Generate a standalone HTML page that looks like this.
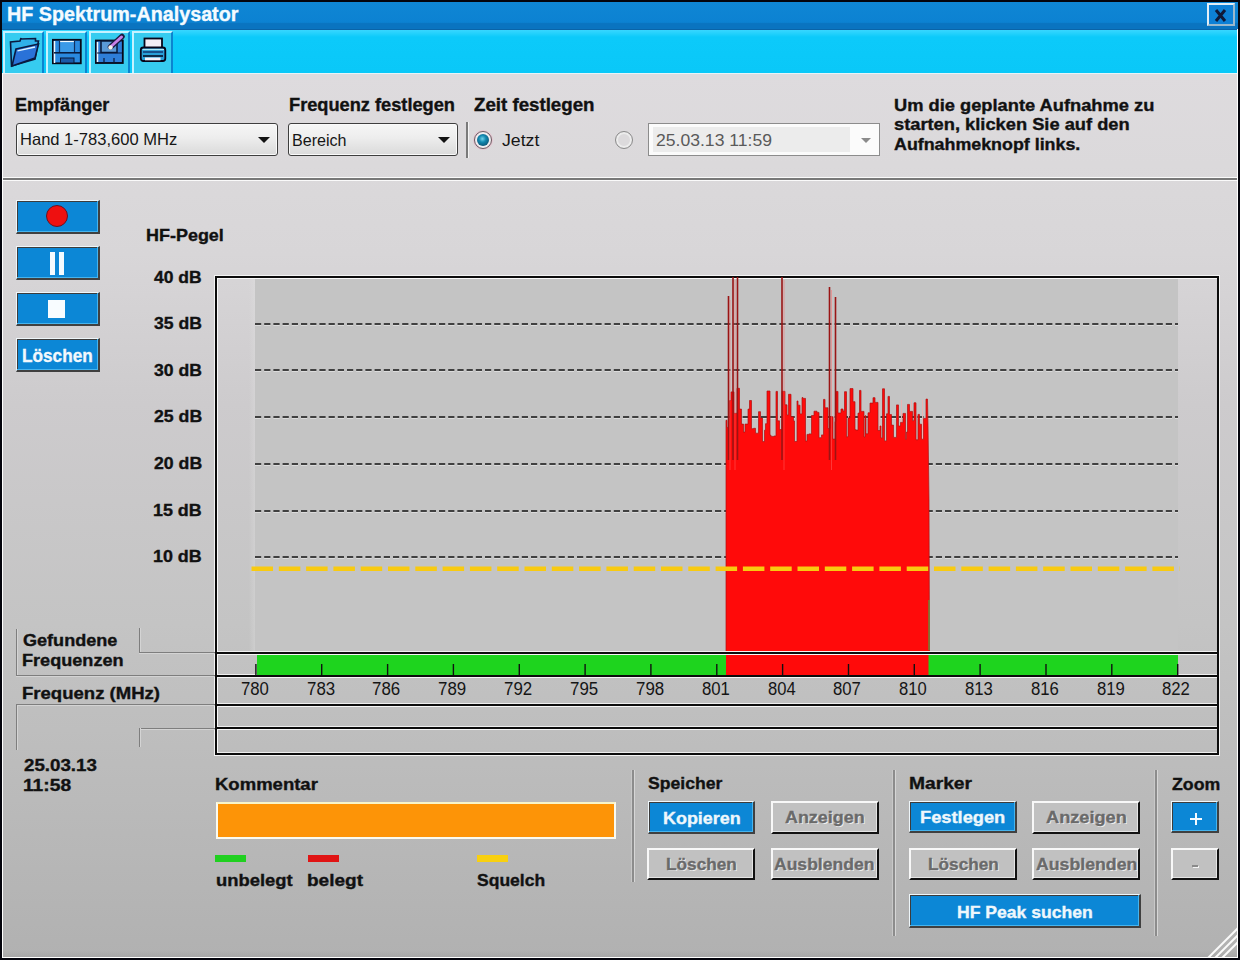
<!DOCTYPE html>
<html><head><meta charset="utf-8">
<style>
*{margin:0;padding:0;box-sizing:border-box}
html,body{width:1240px;height:960px;overflow:hidden;background:#04040c}
body{position:relative;font-family:"Liberation Sans",sans-serif;color:#111}
.a{position:absolute}
.tx{position:absolute;white-space:nowrap;transform-origin:0 0;font-family:"Liberation Sans",sans-serif}
#title{position:absolute;left:2px;top:2px;width:1236px;height:27px;background:linear-gradient(#0f86d4 0,#0c82d2 75%,#0a74c0 80%,#0a74c0 100%)}
#close{position:absolute;left:1207px;top:3px;width:28px;height:23px;border:2px solid #e2eef6;border-right-color:#9ab8cc;border-bottom-color:#9ab8cc;background:#0d80d6}
#tool{position:absolute;left:2px;top:29px;width:1235px;height:44px;background:linear-gradient(#38d6ff 0,#20d0fc 4px,#0ccafa 7px,#0ac8f8 100%);border-top:1px solid #0a64a8}
.tb{position:absolute;top:1px;width:41px;height:42px;background:#36ccf0;border-left:2px solid #c4f2ff;border-top:2px solid #c4f2ff;border-right:2px solid #0b84d0}
#main{position:absolute;left:3px;top:73px;width:1234px;height:884px;background:linear-gradient(#dedbde 0,#dbd9db 90px,#d8d6d8 180px,#cdcbcd 330px,#c4c4c4 550px,#b8b8b8 760px,#b1b1b1 884px);border-top:1px solid #e8f4f8}
.dd{position:absolute;border:1px solid #3e3e3e;border-radius:3px;background:linear-gradient(#f6f6f6 0,#ededed 45%,#dadada 100%);box-shadow:inset 0 0 0 1px #fafafa}
.arr{position:absolute;width:0;height:0;border-left:6px solid transparent;border-right:6px solid transparent;border-top:6px solid #111}
.bb{position:absolute;background:#0c87d6;border-top:1px solid #eef6fa;border-left:1px solid #eef6fa;border-right:2px solid #404040;border-bottom:2px solid #404040;box-shadow:inset -1px -1px 0 #46b4ee, inset 1px 1px 0 #3c3c3c}
.gb{position:absolute;background:#c1c1c1;border-top:2px solid #f8f8f8;border-left:2px solid #f8f8f8;border-right:2px solid #111;border-bottom:2px solid #111;box-shadow:inset -1px -1px 0 #e4e4e4}
.vs{position:absolute;width:2px;background:#8c8c8c;box-shadow:1px 0 0 #d6d6d6,-1px 0 0 #c8c8c8}
.gl{position:absolute;background:#7e7e7e}
</style></head><body>
<!-- window frame -->
<div class="a" style="left:2px;top:2px;width:1236px;height:956px;background:#fff"></div>
<div id="title"></div>
<div id="close"><svg width="23" height="20" style="position:absolute;left:0;top:0"><path d="M7,5 L16,16 M16,5 L7,16" stroke="#101838" stroke-width="3"/></svg></div>
<div id="tool">
  <div class="tb" style="left:1px"><svg width="40" height="40" style="position:absolute;left:4px;top:4px">
    <path d="M1.5,5 L2.5,29 L26,22 L29.5,4 L26.5,4 L26.5,1.5 L12,2 L12,1 L11,4 Z" fill="#30b0e8" stroke="#0a1a40" stroke-width="1.6"/>
    <path d="M7,12 L29.5,7 L26,21 L3,29 Z" fill="#2a72d8" stroke="#0a1a40" stroke-width="1.6"/>
    <path d="M8.5,13.8 L26,10" stroke="#e0f4ff" stroke-width="1.3"/>
  </svg></div>
  <div class="tb" style="left:44px"><svg width="40" height="40" style="position:absolute;left:4px;top:4px">
    <rect x="0.8" y="2.8" width="28" height="23.5" fill="#2a8ae0" stroke="#060818" stroke-width="1.8"/>
    <rect x="8" y="4" width="14" height="11" fill="#3a9ae8"/>
    <path d="M8,4.5 L22,4.5" stroke="#f4fbff" stroke-width="1.2"/>
    <path d="M2.5,4 L2.5,26" stroke="#f4fbff" stroke-width="1.5"/>
    <path d="M7.5,3 L7.5,15.5 M22.5,3 L22.5,15.5" stroke="#103060" stroke-width="1.2"/>
    <path d="M2,15.8 L28,15.8" stroke="#081838" stroke-width="1.5"/>
    <rect x="8.5" y="21" width="13.5" height="5" fill="#1a5aa8" stroke="#0a1838" stroke-width="1"/>
  </svg></div>
  <div class="tb" style="left:87px"><svg width="40" height="40" style="position:absolute;left:4px;top:0px">
    <rect x="0.8" y="7.5" width="27" height="22.5" fill="#2e7ed8" stroke="#060818" stroke-width="1.8"/>
    <path d="M2.5,9 L2.5,29" stroke="#f4fbff" stroke-width="1.5"/>
    <rect x="6" y="8" width="16" height="11.5" fill="#5a9ad8" stroke="#081838" stroke-width="1.5"/>
    <path d="M2,20 L27,20" stroke="#0a1838" stroke-width="1"/>
    <path d="M9,25 L9,30 M19,25 L19,30" stroke="#0a1838" stroke-width="1.2"/>
    <path d="M15.5,14 L27,3.5" stroke="#1a1a40" stroke-width="5.5" stroke-linecap="round"/>
    <path d="M16.5,13 L26.5,4" stroke="#c880e8" stroke-width="3" stroke-linecap="round"/>
    <circle cx="15.5" cy="14.5" r="2.2" fill="#f4f4f0"/>
  </svg></div>
  <div class="tb" style="left:130px"><svg width="40" height="40" style="position:absolute;left:4px;top:4px">
    <rect x="6.5" y="1.5" width="17.5" height="10" fill="#f2eef6" stroke="#06061a" stroke-width="1.8"/>
    <rect x="2.8" y="10.5" width="24.5" height="13.5" rx="2.5" fill="#28a0d8" stroke="#06061a" stroke-width="1.8"/>
    <path d="M4.5,12.5 L26,12.5" stroke="#b0e8f8" stroke-width="1.2"/>
    <path d="M5,15 L25,15" stroke="#10306a" stroke-width="1.4"/>
    <path d="M5,19 L25,19" stroke="#06061a" stroke-width="1.5"/>
    <rect x="7" y="20.5" width="15.5" height="2.8" fill="#f4f0f8"/>
  </svg></div>
</div>
<div id="main"></div>

<!-- top controls -->
<div class="dd" style="left:16px;top:123px;width:262px;height:33px"><div class="arr" style="left:241px;top:13px"></div></div>
<div class="dd" style="left:288px;top:123px;width:170px;height:33px"><div class="arr" style="left:149px;top:13px"></div></div>
<div class="vs" style="left:466px;top:122px;height:36px;width:2px;border:0;background:#7a7a7a;box-shadow:1px 0 0 #f4f4f4"></div>
<!-- radio 1 -->
<div class="a" style="left:474px;top:131px;width:18px;height:18px;border-radius:50%;background:#f0ecf0;border:1.5px solid #6a5a60;box-shadow:0 0 0 1px #e4c4d0"></div>
<div class="a" style="left:477px;top:134px;width:12px;height:12px;border-radius:50%;background:radial-gradient(circle at 45% 40%,#70d0e8 0,#1488b0 35%,#083a58 100%);"></div>
<!-- radio 2 -->
<div class="a" style="left:615px;top:131px;width:18px;height:18px;border-radius:50%;background:#dcdadc;border:1.5px solid #8a8a8a;box-shadow:inset 0 0 0 2px #ececec"></div>
<!-- date box -->
<div class="a" style="left:648px;top:123px;width:232px;height:33px;background:#fbfbfb;border:1px solid #8c8c8c"></div>
<div class="a" style="left:653px;top:127px;width:197px;height:25px;background:#ececec"></div>
<div class="arr" style="left:861px;top:138px;border-left-width:5px;border-right-width:5px;border-top:5px solid #8a8a8a"></div>
<!-- separator -->
<div class="a" style="left:3px;top:177px;width:1234px;height:4px;background:#787878;border-top:1px solid #fafafa;border-bottom:1px solid #fafafa"></div>

<!-- left buttons -->
<div class="bb" style="left:16px;top:200px;width:84px;height:34px"></div>
<div class="a" style="left:45.5px;top:205px;width:22px;height:22px;border-radius:50%;background:#ee1010;border:1px solid #6a1020"></div>
<div class="bb" style="left:16px;top:246px;width:84px;height:34px"></div>
<div class="a" style="left:50px;top:252px;width:5px;height:23px;background:#f4fbff"></div>
<div class="a" style="left:59px;top:252px;width:5px;height:23px;background:#f4fbff"></div>
<div class="bb" style="left:16px;top:292px;width:84px;height:34px"></div>
<div class="a" style="left:48px;top:300px;width:17px;height:18px;background:#f8fcff"></div>
<div class="bb" style="left:16px;top:338px;width:84px;height:34px"></div>

<!-- chart -->
<div class="a" style="left:214px;top:275px;width:1006px;height:481px;border:1px solid #f4f4f4"></div>
<div class="a" style="left:215px;top:276px;width:1004px;height:479px;border:2px solid #0c0c0c"></div>
<div class="a" style="left:217px;top:278px;width:1000px;height:1px;background:#f8f8f8"></div>
<div class="a" style="left:217px;top:278px;width:1px;height:475px;background:#f8f8f8"></div>
<div class="a" style="left:249px;top:279px;width:6px;height:373px;background:linear-gradient(90deg,rgba(225,225,225,0),rgba(225,225,225,.35))"></div>
<div class="a" style="left:255px;top:279px;width:923px;height:373px;background:#c4c4c4"></div>
<svg class="a" style="left:0;top:0" width="1240" height="960">
  <g stroke="#f0f0f0" stroke-width="1" stroke-dasharray="6.2 3" opacity=".55"><line x1="255" y1="325.5" x2="1178" y2="325.5"/><line x1="255" y1="371.5" x2="1178" y2="371.5"/><line x1="255" y1="418.5" x2="1178" y2="418.5"/><line x1="255" y1="465.5" x2="1178" y2="465.5"/><line x1="255" y1="512.5" x2="1178" y2="512.5"/><line x1="255" y1="558.5" x2="1178" y2="558.5"/></g>
  <g stroke="#141414" stroke-width="1.7" stroke-dasharray="6.2 3"><line x1="255" y1="324.0" x2="1178" y2="324.0"/><line x1="255" y1="370.0" x2="1178" y2="370.0"/><line x1="255" y1="417.0" x2="1178" y2="417.0"/><line x1="255" y1="464.0" x2="1178" y2="464.0"/><line x1="255" y1="511.0" x2="1178" y2="511.0"/><line x1="255" y1="557.0" x2="1178" y2="557.0"/></g>
  <g stroke="#e6b4b4" stroke-width="1"><line x1="730.5" y1="400" x2="730.5" y2="447.6"/><line x1="767.5" y1="400" x2="767.5" y2="443.6"/><line x1="779.5" y1="400" x2="779.5" y2="445.3"/><line x1="803.5" y1="400" x2="803.5" y2="438.9"/><line x1="848.5" y1="400" x2="848.5" y2="442.2"/><line x1="879.5" y1="400" x2="879.5" y2="435.5"/><line x1="901.5" y1="400" x2="901.5" y2="434.3"/><line x1="911.5" y1="400" x2="911.5" y2="440.6"/><line x1="922.5" y1="400" x2="922.5" y2="440.5"/></g>
  <path d="M726.0,652.0 L726.0,450.0 L726.0,420.3 L727.0,420.3 L727.0,427.4 L728.5,427.4 L728.5,419.2 L729.5,419.2 L729.5,400.6 L731.0,400.6 L731.0,391.9 L734.0,391.9 L734.0,413.3 L737.0,413.3 L737.0,388.3 L739.5,388.3 L739.5,409.1 L741.5,409.1 L741.5,424.1 L743.5,424.1 L743.5,432.1 L745.0,432.1 L745.0,424.1 L748.0,424.1 L748.0,409.1 L749.5,409.1 L749.5,400.5 L751.5,400.5 L751.5,428.7 L753.5,428.7 L753.5,428.3 L755.5,428.3 L755.5,433.2 L758.5,433.2 L758.5,411.7 L760.5,411.7 L760.5,418.0 L762.5,418.0 L762.5,441.6 L764.5,441.6 L764.5,430.2 L765.5,430.2 L765.5,423.7 L767.0,423.7 L767.0,391.0 L770.0,391.0 L770.0,435.2 L771.0,435.2 L771.0,436.4 L774.0,436.4 L774.0,436.0 L776.0,436.0 L776.0,391.4 L777.5,391.4 L777.5,420.8 L779.5,420.8 L779.5,429.6 L782.0,429.6 L782.0,391.3 L785.0,391.3 L785.0,404.8 L787.0,404.8 L787.0,415.0 L788.5,415.0 L788.5,394.3 L791.0,394.3 L791.0,416.8 L793.5,416.8 L793.5,420.9 L794.5,420.9 L794.5,441.5 L797.0,441.5 L797.0,401.0 L798.0,401.0 L798.0,405.2 L800.0,405.2 L800.0,413.9 L802.0,413.9 L802.0,397.6 L803.0,397.6 L803.0,398.4 L805.5,398.4 L805.5,441.1 L807.0,441.1 L807.0,434.4 L809.0,434.4 L809.0,433.9 L811.5,433.9 L811.5,415.5 L814.0,415.5 L814.0,411.2 L817.0,411.2 L817.0,412.4 L819.0,412.4 L819.0,437.7 L821.5,437.7 L821.5,434.9 L823.5,434.9 L823.5,399.4 L825.0,399.4 L825.0,407.8 L828.0,407.8 L828.0,428.5 L830.0,428.5 L830.0,416.7 L833.0,416.7 L833.0,439.1 L835.0,439.1 L835.0,421.6 L836.0,421.6 L836.0,391.4 L838.0,391.4 L838.0,413.0 L841.0,413.0 L841.0,409.0 L843.0,409.0 L843.0,410.9 L844.5,410.9 L844.5,391.7 L846.5,391.7 L846.5,436.8 L848.0,436.8 L848.0,418.0 L850.0,418.0 L850.0,388.6 L853.0,388.6 L853.0,401.7 L855.0,401.7 L855.0,429.7 L856.0,429.7 L856.0,430.1 L858.0,430.1 L858.0,413.1 L859.5,413.1 L859.5,390.4 L861.0,390.4 L861.0,411.4 L864.0,411.4 L864.0,437.0 L865.0,437.0 L865.0,415.8 L866.0,415.8 L866.0,433.8 L868.0,433.8 L868.0,412.8 L870.0,412.8 L870.0,403.1 L873.0,403.1 L873.0,397.7 L875.0,397.7 L875.0,402.4 L878.0,402.4 L878.0,430.5 L880.0,430.5 L880.0,426.0 L881.0,426.0 L881.0,437.9 L882.5,437.9 L882.5,388.8 L884.5,388.8 L884.5,440.9 L886.5,440.9 L886.5,413.8 L888.0,413.8 L888.0,396.4 L889.5,396.4 L889.5,414.6 L891.5,414.6 L891.5,425.1 L893.5,425.1 L893.5,437.4 L896.5,437.4 L896.5,404.9 L898.5,404.9 L898.5,426.0 L900.5,426.0 L900.5,422.4 L903.0,422.4 L903.0,413.4 L905.5,413.4 L905.5,439.3 L906.5,439.3 L906.5,432.0 L907.5,432.0 L907.5,404.4 L909.5,404.4 L909.5,411.4 L912.5,411.4 L912.5,420.7 L914.0,420.7 L914.0,402.8 L916.0,402.8 L916.0,439.8 L918.0,439.8 L918.0,414.4 L919.5,414.4 L919.5,424.2 L921.5,424.2 L921.5,439.2 L923.5,439.2 L923.5,418.4 L926.0,418.4 L926.0,399.1 L927.5,399.1 L928.0,425.0 L929.0,500.0 L929.5,652.0 Z" fill="#ff0a0a" stroke="#b01010" stroke-width="0.7"/>
  <g stroke="#a41212" stroke-width="1"></g>
  
  <g stroke="#9a1414" stroke-width="1.6"><line x1="728.5" y1="296.0" x2="728.5" y2="460"/><line x1="733.0" y1="277.0" x2="733.0" y2="460"/><line x1="737.5" y1="277.0" x2="737.5" y2="460"/><line x1="782.0" y1="277.0" x2="782.0" y2="460"/><line x1="829.5" y1="287.0" x2="829.5" y2="460"/><line x1="835.5" y1="297.0" x2="835.5" y2="460"/></g>
  <g stroke="#ff6a6a" stroke-width="0.8" opacity=".6"><line x1="730" y1="300" x2="730" y2="470"/><line x1="735" y1="280" x2="735" y2="470"/><line x1="784" y1="280" x2="784" y2="470"/><line x1="831.5" y1="290" x2="831.5" y2="470"/></g>
  <line x1="929" y1="600" x2="929" y2="650" stroke="#50a040" stroke-width="1.2"/>
  <line x1="251.5" y1="568.7" x2="1180" y2="568.7" stroke="#f8ca10" stroke-width="4.5" stroke-dasharray="21.5 5.8"/>
  <!-- rows -->
  <rect x="218" y="651" width="999" height="1" fill="#f0f0f0"/>
  <rect x="218" y="674" width="999" height="1" fill="#eeeeee"/>
  <rect x="218" y="703" width="999" height="1" fill="#eeeeee"/>
  <rect x="218" y="726" width="999" height="1" fill="#eeeeee"/>
  <rect x="218" y="752" width="999" height="1" fill="#eeeeee"/>
  <rect x="217" y="652" width="1000" height="2" fill="#0c0c0c"/>
  <rect x="217" y="654" width="1000" height="1" fill="#f6f6f6"/>
  <rect x="257" y="655" width="921" height="20" fill="#1ed41e"/>
  <rect x="726" y="655" width="202.5" height="20" fill="#ff0a0a"/>
  <g stroke="#101010" stroke-width="1.4"><line x1="255.9" y1="664" x2="255.9" y2="675"/><line x1="321.7" y1="664" x2="321.7" y2="675"/><line x1="387.6" y1="664" x2="387.6" y2="675"/><line x1="453.4" y1="664" x2="453.4" y2="675"/><line x1="519.3" y1="664" x2="519.3" y2="675"/><line x1="585.1" y1="664" x2="585.1" y2="675"/><line x1="650.9" y1="664" x2="650.9" y2="675"/><line x1="716.8" y1="664" x2="716.8" y2="675"/><line x1="782.6" y1="664" x2="782.6" y2="675"/><line x1="848.5" y1="664" x2="848.5" y2="675"/><line x1="914.3" y1="664" x2="914.3" y2="675"/><line x1="980.1" y1="664" x2="980.1" y2="675"/><line x1="1046.0" y1="664" x2="1046.0" y2="675"/><line x1="1111.8" y1="664" x2="1111.8" y2="675"/><line x1="1177.7" y1="664" x2="1177.7" y2="675"/></g>
  <rect x="217" y="675" width="1000" height="2" fill="#0c0c0c"/>
  <rect x="217" y="677" width="1000" height="1" fill="#f6f6f6"/>
  <rect x="217" y="704" width="1000" height="2" fill="#0c0c0c"/>
  <rect x="217" y="706" width="1000" height="1" fill="#f6f6f6"/>
  <rect x="217" y="727" width="1000" height="2" fill="#0c0c0c"/>
  <rect x="217" y="729" width="1000" height="1" fill="#f6f6f6"/>
</svg>

<!-- left table lines -->
<div class="gl" style="left:16px;top:629px;width:1px;height:47px;box-shadow:1px 0 0 #d4d4d4"></div>
<div class="gl" style="left:139px;top:628px;width:1px;height:24px;box-shadow:1px 0 0 #d4d4d4"></div>
<div class="gl" style="left:139px;top:652px;width:76px;height:1px;box-shadow:0 1px 0 #d4d4d4"></div>
<div class="gl" style="left:16px;top:675px;width:199px;height:1px;box-shadow:0 1px 0 #d4d4d4"></div>
<div class="gl" style="left:16px;top:704px;width:199px;height:1px;box-shadow:0 1px 0 #d4d4d4"></div>
<div class="gl" style="left:16px;top:705px;width:1px;height:45px;box-shadow:1px 0 0 #d4d4d4"></div>
<div class="gl" style="left:139px;top:728px;width:76px;height:1px;box-shadow:0 1px 0 #d4d4d4"></div>
<div class="gl" style="left:139px;top:728px;width:1px;height:19px;box-shadow:1px 0 0 #d4d4d4"></div>

<!-- bottom -->
<div class="a" style="left:216px;top:802px;width:400px;height:37px;background:#fd9407;border:2px solid #fafaf0;border-top-color:#f8f4c8"></div>
<div class="a" style="left:215px;top:855px;width:31px;height:7px;background:#20d020"></div>
<div class="a" style="left:308px;top:855px;width:31px;height:7px;background:#e01414"></div>
<div class="a" style="left:477px;top:855px;width:31px;height:7px;background:#f8d010"></div>

<div class="vs" style="left:632px;top:770px;height:112px"></div>
<div class="bb" style="left:648px;top:801px;width:107px;height:33px"></div>
<div class="gb" style="left:771px;top:801px;width:108px;height:33px"></div>
<div class="gb" style="left:647px;top:848px;width:108px;height:32px"></div>
<div class="gb" style="left:771px;top:848px;width:108px;height:32px"></div>

<div class="vs" style="left:893px;top:770px;height:166px"></div>
<div class="bb" style="left:909px;top:801px;width:108px;height:32px"></div>
<div class="gb" style="left:1032px;top:801px;width:108px;height:33px"></div>
<div class="gb" style="left:909px;top:848px;width:108px;height:32px"></div>
<div class="gb" style="left:1032px;top:848px;width:108px;height:32px"></div>
<div class="bb" style="left:909px;top:894px;width:232px;height:34px"></div>

<div class="vs" style="left:1155px;top:770px;height:166px"></div>
<div class="bb" style="left:1171px;top:801px;width:48px;height:32px"></div>
<div class="a" style="left:1189.5px;top:818px;width:12px;height:2px;background:#f4faff"></div>
<div class="a" style="left:1194.5px;top:813px;width:2px;height:12px;background:#f4faff"></div>
<div class="gb" style="left:1171px;top:848px;width:48px;height:32px"></div>
<div class="a" style="left:1192px;top:865px;width:6px;height:2px;background:#8a8a8a;box-shadow:1px 1px 0 #f4f4f4"></div>

<div class="a" style="left:3px;top:951px;width:1234px;height:6px;background:linear-gradient(rgba(150,150,150,0),rgba(150,150,150,.35))"></div>
<!-- resize grip -->
<svg class="a" style="left:1205px;top:925px" width="33" height="33">
  <g stroke="#fafafa" stroke-width="2"><line x1="33" y1="3" x2="3" y2="33"/><line x1="33" y1="10" x2="10" y2="33"/><line x1="33" y1="17" x2="17" y2="33"/></g>
</svg>

<div class="tx" style="left:7.17px;top:4.95px;font-size:19.48px;line-height:19.48px;font-weight:bold;color:#f4fbff;transform:scaleX(1.0138);-webkit-text-stroke:0.35px currentColor;">HF Spektrum-Analysator</div>
<div class="tx" style="left:15.37px;top:97.18px;font-size:17.44px;line-height:17.44px;font-weight:bold;color:#111;transform:scaleX(1.0349);-webkit-text-stroke:0.35px currentColor;">Empfänger</div>
<div class="tx" style="left:289.26px;top:97.18px;font-size:17.44px;line-height:17.44px;font-weight:bold;color:#111;transform:scaleX(1.0445);-webkit-text-stroke:0.35px currentColor;">Frequenz festlegen</div>
<div class="tx" style="left:473.81px;top:97.18px;font-size:17.44px;line-height:17.44px;font-weight:bold;color:#111;transform:scaleX(1.0718);-webkit-text-stroke:0.35px currentColor;">Zeit festlegen</div>
<div class="tx" style="left:19.51px;top:131.79px;font-size:16.72px;line-height:16.72px;font-weight:normal;color:#151515;transform:scaleX(0.9898);">Hand 1-783,600 MHz</div>
<div class="tx" style="left:292.44px;top:131.72px;font-size:17.15px;line-height:17.15px;font-weight:normal;color:#151515;transform:scaleX(0.9382);">Bereich</div>
<div class="tx" style="left:502.02px;top:131.72px;font-size:17.15px;line-height:17.15px;font-weight:normal;color:#151515;transform:scaleX(1.0302);">Jetzt</div>
<div class="tx" style="left:656.18px;top:133.19px;font-size:16.72px;line-height:16.72px;font-weight:normal;color:#5a5a5a;transform:scaleX(1.0520);">25.03.13 11:59</div>
<div class="tx" style="left:893.64px;top:96.56px;font-size:16.28px;line-height:16.28px;font-weight:bold;color:#111;transform:scaleX(1.1238);-webkit-text-stroke:0.35px currentColor;">Um die geplante Aufnahme zu</div>
<div class="tx" style="left:893.93px;top:116.26px;font-size:16.28px;line-height:16.28px;font-weight:bold;color:#111;transform:scaleX(1.1237);-webkit-text-stroke:0.35px currentColor;">starten, klicken Sie auf den</div>
<div class="tx" style="left:894.22px;top:136.46px;font-size:16.28px;line-height:16.28px;font-weight:bold;color:#111;transform:scaleX(1.0964);-webkit-text-stroke:0.35px currentColor;">Aufnahmeknopf links.</div>
<div class="tx" style="left:21.93px;top:348.28px;font-size:17.44px;line-height:17.44px;font-weight:bold;color:#f2f8fc;transform:scaleX(0.9859);-webkit-text-stroke:0.35px currentColor;">Löschen</div>
<div class="tx" style="left:146.38px;top:227.06px;font-size:16.28px;line-height:16.28px;font-weight:bold;color:#111;transform:scaleX(1.1039);-webkit-text-stroke:0.35px currentColor;">HF-Pegel</div>
<div class="tx" style="left:154.25px;top:268.55px;font-size:17.01px;line-height:17.01px;font-weight:bold;color:#111;transform:scaleX(1.0280);-webkit-text-stroke:0.35px currentColor;">40 dB</div>
<div class="tx" style="left:153.98px;top:315.15px;font-size:17.01px;line-height:17.01px;font-weight:bold;color:#111;transform:scaleX(1.0340);-webkit-text-stroke:0.35px currentColor;">35 dB</div>
<div class="tx" style="left:153.98px;top:361.75px;font-size:17.01px;line-height:17.01px;font-weight:bold;color:#111;transform:scaleX(1.0340);-webkit-text-stroke:0.35px currentColor;">30 dB</div>
<div class="tx" style="left:153.70px;top:408.35px;font-size:17.01px;line-height:17.01px;font-weight:bold;color:#111;transform:scaleX(1.0401);-webkit-text-stroke:0.35px currentColor;">25 dB</div>
<div class="tx" style="left:153.70px;top:454.95px;font-size:17.01px;line-height:17.01px;font-weight:bold;color:#111;transform:scaleX(1.0401);-webkit-text-stroke:0.35px currentColor;">20 dB</div>
<div class="tx" style="left:153.13px;top:501.55px;font-size:17.01px;line-height:17.01px;font-weight:bold;color:#111;transform:scaleX(1.0525);-webkit-text-stroke:0.35px currentColor;">15 dB</div>
<div class="tx" style="left:153.13px;top:548.15px;font-size:17.01px;line-height:17.01px;font-weight:bold;color:#111;transform:scaleX(1.0525);-webkit-text-stroke:0.35px currentColor;">10 dB</div>
<div class="tx" style="left:23.04px;top:632.55px;font-size:15.70px;line-height:15.70px;font-weight:bold;color:#111;transform:scaleX(1.1516);-webkit-text-stroke:0.35px currentColor;">Gefundene</div>
<div class="tx" style="left:22.47px;top:652.55px;font-size:15.70px;line-height:15.70px;font-weight:bold;color:#111;transform:scaleX(1.1534);-webkit-text-stroke:0.35px currentColor;">Frequenzen</div>
<div class="tx" style="left:22.44px;top:686.45px;font-size:15.70px;line-height:15.70px;font-weight:bold;color:#111;transform:scaleX(1.1821);-webkit-text-stroke:0.35px currentColor;">Frequenz (MHz)</div>
<div class="tx" style="left:240.87px;top:678.80px;font-size:19.19px;line-height:19.19px;font-weight:normal;color:#151515;transform:scaleX(0.8716);">780</div>
<div class="tx" style="left:306.67px;top:678.80px;font-size:19.19px;line-height:19.19px;font-weight:normal;color:#151515;transform:scaleX(0.8802);">783</div>
<div class="tx" style="left:372.48px;top:678.80px;font-size:19.19px;line-height:19.19px;font-weight:normal;color:#151515;transform:scaleX(0.8802);">786</div>
<div class="tx" style="left:438.29px;top:678.80px;font-size:19.19px;line-height:19.19px;font-weight:normal;color:#151515;transform:scaleX(0.8802);">789</div>
<div class="tx" style="left:504.10px;top:678.80px;font-size:19.19px;line-height:19.19px;font-weight:normal;color:#151515;transform:scaleX(0.8802);">792</div>
<div class="tx" style="left:569.91px;top:678.80px;font-size:19.19px;line-height:19.19px;font-weight:normal;color:#151515;transform:scaleX(0.8802);">795</div>
<div class="tx" style="left:635.72px;top:678.80px;font-size:19.19px;line-height:19.19px;font-weight:normal;color:#151515;transform:scaleX(0.8802);">798</div>
<div class="tx" style="left:701.80px;top:678.80px;font-size:19.19px;line-height:19.19px;font-weight:normal;color:#151515;transform:scaleX(0.8716);">801</div>
<div class="tx" style="left:767.61px;top:678.80px;font-size:19.19px;line-height:19.19px;font-weight:normal;color:#151515;transform:scaleX(0.8631);">804</div>
<div class="tx" style="left:833.42px;top:678.80px;font-size:19.19px;line-height:19.19px;font-weight:normal;color:#151515;transform:scaleX(0.8716);">807</div>
<div class="tx" style="left:899.23px;top:678.80px;font-size:19.19px;line-height:19.19px;font-weight:normal;color:#151515;transform:scaleX(0.8631);">810</div>
<div class="tx" style="left:965.04px;top:678.80px;font-size:19.19px;line-height:19.19px;font-weight:normal;color:#151515;transform:scaleX(0.8716);">813</div>
<div class="tx" style="left:1030.85px;top:678.80px;font-size:19.19px;line-height:19.19px;font-weight:normal;color:#151515;transform:scaleX(0.8716);">816</div>
<div class="tx" style="left:1096.66px;top:678.80px;font-size:19.19px;line-height:19.19px;font-weight:normal;color:#151515;transform:scaleX(0.8716);">819</div>
<div class="tx" style="left:1162.47px;top:678.80px;font-size:19.19px;line-height:19.19px;font-weight:normal;color:#151515;transform:scaleX(0.8716);">822</div>
<div class="tx" style="left:23.92px;top:757.77px;font-size:16.86px;line-height:16.86px;font-weight:bold;color:#111;transform:scaleX(1.1100);-webkit-text-stroke:0.35px currentColor;">25.03.13</div>
<div class="tx" style="left:23.30px;top:777.67px;font-size:16.86px;line-height:16.86px;font-weight:bold;color:#111;transform:scaleX(1.1395);-webkit-text-stroke:0.35px currentColor;">11:58</div>
<div class="tx" style="left:215.34px;top:776.59px;font-size:16.72px;line-height:16.72px;font-weight:bold;color:#111;transform:scaleX(1.1081);-webkit-text-stroke:0.35px currentColor;">Kommentar</div>
<div class="tx" style="left:215.64px;top:871.54px;font-size:16.42px;line-height:16.42px;font-weight:bold;color:#111;transform:scaleX(1.1216);-webkit-text-stroke:0.35px currentColor;">unbelegt</div>
<div class="tx" style="left:307.01px;top:871.54px;font-size:16.42px;line-height:16.42px;font-weight:bold;color:#111;transform:scaleX(1.1595);-webkit-text-stroke:0.35px currentColor;">belegt</div>
<div class="tx" style="left:476.63px;top:871.54px;font-size:16.42px;line-height:16.42px;font-weight:bold;color:#111;transform:scaleX(1.0679);-webkit-text-stroke:0.35px currentColor;">Squelch</div>
<div class="tx" style="left:648.43px;top:776.29px;font-size:16.72px;line-height:16.72px;font-weight:bold;color:#111;transform:scaleX(1.0526);-webkit-text-stroke:0.35px currentColor;">Speicher</div>
<div class="tx" style="left:663.18px;top:810.89px;font-size:16.72px;line-height:16.72px;font-weight:bold;color:#eef7fc;transform:scaleX(1.0724);-webkit-text-stroke:0.35px currentColor;">Kopieren</div>
<div class="tx" style="left:784.52px;top:810.19px;font-size:16.72px;line-height:16.72px;font-weight:bold;color:#6a6a6a;transform:scaleX(1.0720);-webkit-text-stroke:0.35px currentColor;text-shadow:1px 1px 0 #f2f2f2;">Anzeigen</div>
<div class="tx" style="left:665.92px;top:856.89px;font-size:16.72px;line-height:16.72px;font-weight:bold;color:#6a6a6a;transform:scaleX(1.0317);-webkit-text-stroke:0.35px currentColor;text-shadow:1px 1px 0 #f2f2f2;">Löschen</div>
<div class="tx" style="left:774.43px;top:856.99px;font-size:16.72px;line-height:16.72px;font-weight:bold;color:#6a6a6a;transform:scaleX(1.0498);-webkit-text-stroke:0.35px currentColor;text-shadow:1px 1px 0 #f2f2f2;">Ausblenden</div>
<div class="tx" style="left:909.10px;top:776.29px;font-size:16.72px;line-height:16.72px;font-weight:bold;color:#111;transform:scaleX(1.1505);-webkit-text-stroke:0.35px currentColor;">Marker</div>
<div class="tx" style="left:919.96px;top:810.19px;font-size:16.72px;line-height:16.72px;font-weight:bold;color:#eef7fc;transform:scaleX(1.0936);-webkit-text-stroke:0.35px currentColor;">Festlegen</div>
<div class="tx" style="left:1046.02px;top:810.19px;font-size:16.72px;line-height:16.72px;font-weight:bold;color:#6a6a6a;transform:scaleX(1.0884);-webkit-text-stroke:0.35px currentColor;text-shadow:1px 1px 0 #f2f2f2;">Anzeigen</div>
<div class="tx" style="left:927.52px;top:856.89px;font-size:16.72px;line-height:16.72px;font-weight:bold;color:#6a6a6a;transform:scaleX(1.0317);-webkit-text-stroke:0.35px currentColor;text-shadow:1px 1px 0 #f2f2f2;">Löschen</div>
<div class="tx" style="left:1035.72px;top:856.99px;font-size:16.72px;line-height:16.72px;font-weight:bold;color:#6a6a6a;transform:scaleX(1.0604);-webkit-text-stroke:0.35px currentColor;text-shadow:1px 1px 0 #f2f2f2;">Ausblenden</div>
<div class="tx" style="left:956.90px;top:904.59px;font-size:16.72px;line-height:16.72px;font-weight:bold;color:#eef7fc;transform:scaleX(1.0529);-webkit-text-stroke:0.35px currentColor;">HF Peak suchen</div>
<div class="tx" style="left:1171.62px;top:776.59px;font-size:16.72px;line-height:16.72px;font-weight:bold;color:#111;transform:scaleX(1.0608);-webkit-text-stroke:0.35px currentColor;">Zoom</div>
</body></html>
